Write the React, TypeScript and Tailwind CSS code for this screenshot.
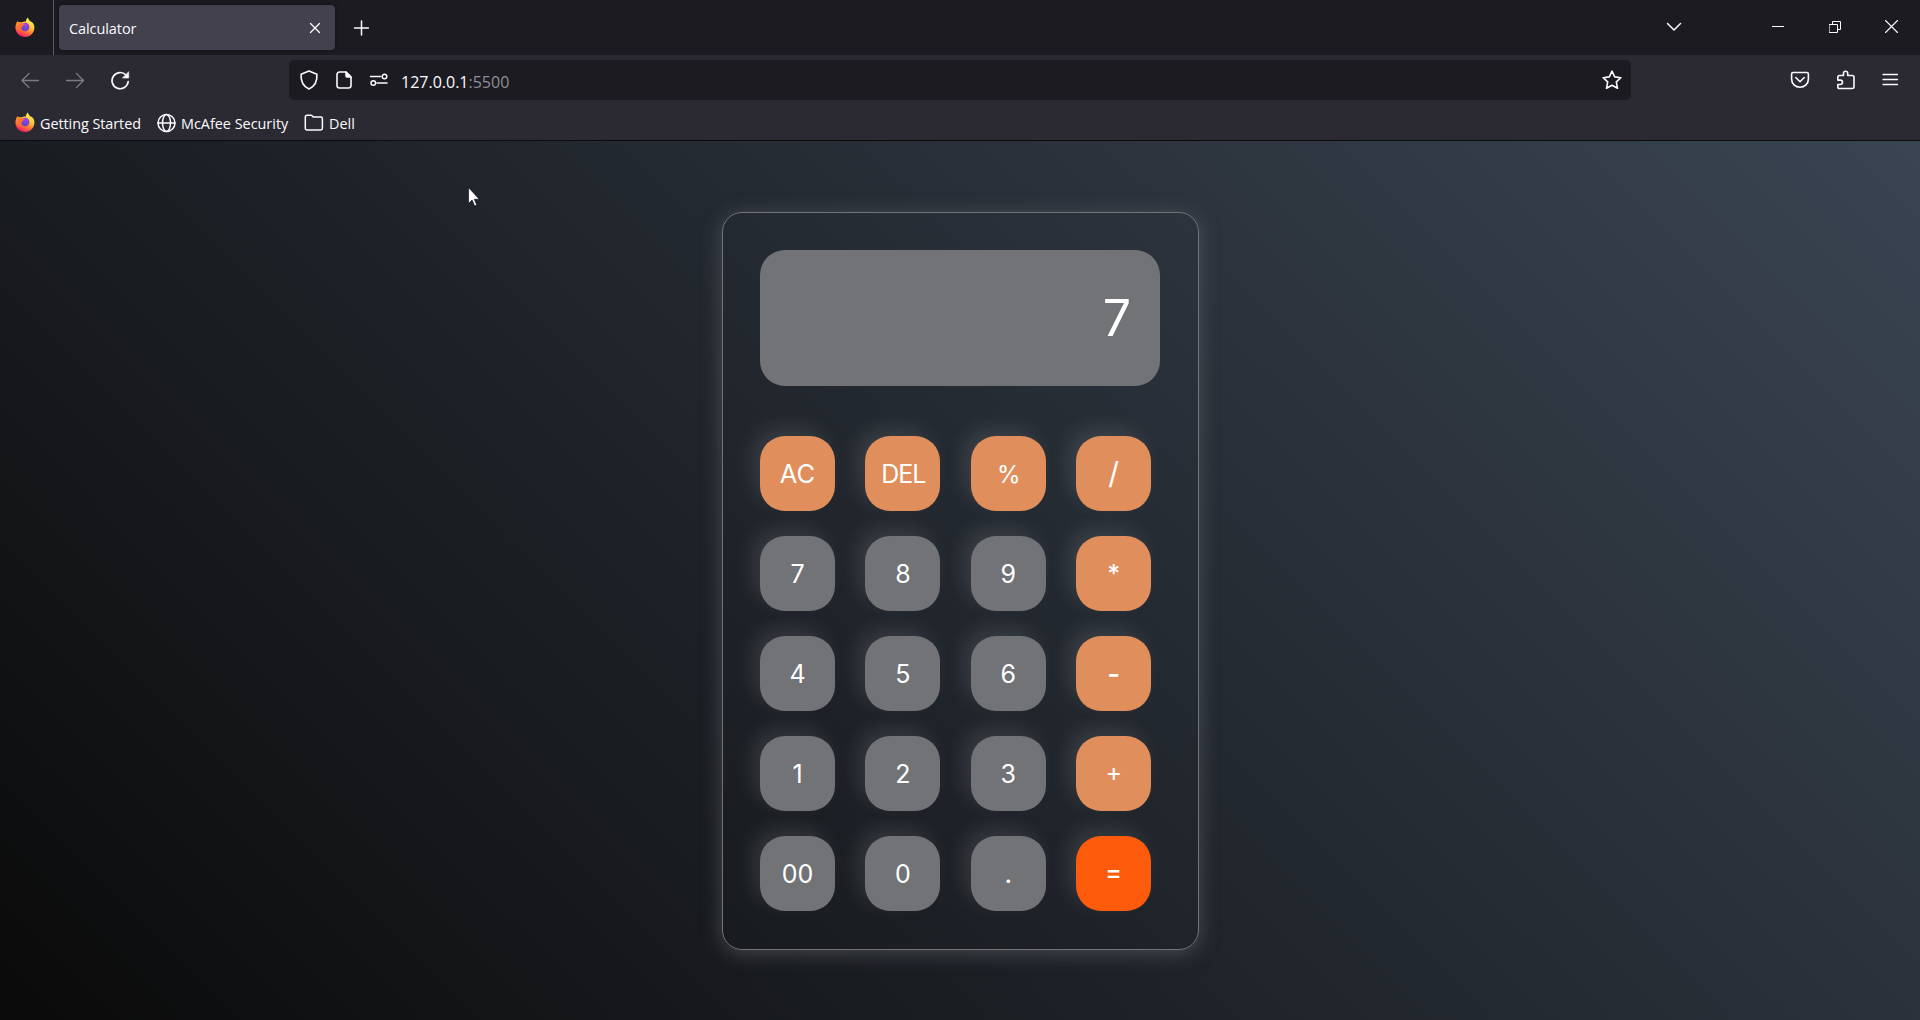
import React from 'react';

type IconProps = { className?: string; children: React.ReactNode; w?: number; h?: number };

function Icon({ className = '', children, w = 20, h = 20 }: IconProps) {
  return (
    <svg
      width={w}
      height={h}
      viewBox={`0 0 ${w} ${h}`}
      fill="none"
      stroke="currentColor"
      strokeWidth="1.5"
      strokeLinecap="round"
      strokeLinejoin="round"
      className={`shrink-0 ${className}`}
    >
      {children}
    </svg>
  );
}

function Firefox({ id }: { id: string }) {
  return (
    <svg width="20" height="20" viewBox="0 0 20 20" className="relative -top-px shrink-0">
      <defs>
        <linearGradient id={`${id}-body`} x1="0.8" y1="0.05" x2="0.35" y2="1">
          <stop offset="0" stopColor="#fff44f" />
          <stop offset="0.4" stopColor="#ffc43a" />
          <stop offset="0.72" stopColor="#ff6a3a" />
          <stop offset="1" stopColor="#f5156c" />
        </linearGradient>
        <radialGradient id={`${id}-globe`} cx="0.6" cy="0.2" r="0.8">
          <stop offset="0" stopColor="#a044ea" />
          <stop offset="1" stopColor="#5b45c9" />
        </radialGradient>
        <linearGradient id={`${id}-fox`} x1="0" y1="0" x2="0.6" y2="1">
          <stop offset="0" stopColor="#ff9a1f" />
          <stop offset="1" stopColor="#ff4f45" />
        </linearGradient>
      </defs>
      <path
        fill={`url(#${id}-body)`}
        d="M2.600 4.200C2.900 5 3.600 5.200 4.500 5c1-.2 1.500 .1 2.200 .6C8.300 4.500 10 4.300 11 4.500 10.900 2.700 11.700 1.100 13 .4c.2 1.700 1.200 2.700 2.300 3.800C18.200 5 19.500 7.500 19.400 11c-.2 5-4.200 8.900-9.300 8.900C4.700 19.900.5 15.800.4 10.700.3 8.300 1.200 6.200 2.600 4.200Z"
      />
      <circle cx="10.200" cy="10" r="4.200" fill={`url(#${id}-globe)`} />
      <path
        fill={`url(#${id}-fox)`}
        d="M2.600 4.200C3.100 5 4.200 5.200 5.200 5.100c.9 0 1.300.7 2 1.100.7.500 2.300.3 2.600.8.200.6-1.500 1.200-1.900 1.500-.2.300 0 1-.4 1.200-.7.400-1.300.9-1.400 1.800-.3 2 .9 3.600 2.700 4.200-4 .5-7.400-2-7.700-5.500-.2-2.400.5-4.300 1.500-6Z"
      />
    </svg>
  );
}

function TabStrip() {
  return (
    <div className="flex h-[55px] items-center bg-[#1c1b22]">
      <div className="flex h-full w-[54px] items-center border-r border-[#5a5961] pl-[15px]">
        <Firefox id="ff-tab" />
      </div>
      <div className="ml-[5px] flex h-[45px] w-[276px] items-center justify-between rounded-[4px] bg-[#42414d] pr-[13px] pl-[10px] shadow-[0_0_4px_rgba(0,0,0,0.5)]">
        <span className="mt-[2px] text-[14.5px] tracking-[-0.08px]">Calculator</span>
        <Icon w={14} h={14}>
          <path d="M2.500 2.500l9 9M11.500 2.500l-9 9" strokeWidth="1.300" />
        </Icon>
      </div>
      <Icon w={16} h={16} className="ml-[18px]">
        <path d="M8.500 1v14M1.500 8h14" />
      </Icon>
      <div className="ml-auto flex items-center">
        <Icon w={16} h={10} className="relative -top-px mr-[90px]">
          <path d="M1.500 1.500L8 8l6.500-6.500" />
        </Icon>
        <Icon w={12} h={12} className="relative -top-px mr-[45px]">
          <path d="M0 5.500h12" strokeWidth="1" strokeLinecap="butt" />
        </Icon>
        <Icon w={12} h={12} className="relative -top-px mr-[44px]">
          <path d="M.5 3.500h8v8h-8zM3.500 3.500v-3h8v8h-3" strokeWidth="1" strokeLinejoin="miter" />
        </Icon>
        <Icon w={13} h={13} className="relative -top-px mr-[22px]">
          <path d="M.5.500l12 12M12.500.500l-12 12" strokeWidth="1.100" />
        </Icon>
      </div>
    </div>
  );
}

function NavBar() {
  return (
    <div className="flex h-[50px] items-center">
      <Icon className="ml-[20px] text-[#7c7b83]">
        <path d="M18.500 10.500H2M9 3.500l-7 7 7 7" strokeWidth="1.300" />
      </Icon>
      <Icon className="ml-[25px] text-[#7c7b83]">
        <path d="M1.500 10.500H18.500M11.500 3.500l7 7-7 7" strokeWidth="1.300" />
      </Icon>
      <Icon className="ml-[25px]">
        <path d="M18.200 11.500A8.100 8.100 0 1 1 16 5" strokeWidth="1.700" />
        <path d="M18.700 2v6h-6z" fill="currentColor" strokeWidth=".6" />
      </Icon>
      <div className="ml-[159px] flex h-[40px] w-[1342px] items-center rounded-[5px] bg-[#1c1b22] pr-[9px] pl-[10px]">
        <Icon>
          <path d="M10 1l7.900 3.300c.4 5.700-1.200 11.700-7.900 14.800C3.300 16 1.700 10 2.100 4.300z" strokeWidth="1.600" />
        </Icon>
        <Icon className="ml-[15px]">
          <path d="M12 2H5.500A2.500 2.500 0 0 0 3 4.500v11A2.500 2.500 0 0 0 5.500 18h9a2.500 2.500 0 0 0 2.500-2.500V7z" strokeWidth="1.600" />
          <path d="M12 2l5 5h-4a1 1 0 0 1-1-1z" fill="currentColor" />
        </Icon>
        <Icon className="ml-[15px]">
          <path d="M1.500 6.500h10M8 13h10" strokeWidth="1.500" />
          <circle cx="15.500" cy="6.500" r="2.300" />
          <circle cx="4.300" cy="13" r="2.300" />
        </Icon>
        <span className="mt-[3px] ml-[12px] text-[16px]">
          127.0.0.1<span className="text-[#8f8e96]">:5500</span>
        </span>
        <Icon w={20} h={20} className="ml-auto">
          <path
            d="M10 1.200l2.700 5.700 6.200.8-4.600 4.200 1.200 6.400L10 15.200l-5.500 3.100 1.200-6.400L1.100 7.700l6.200-.8z"
            strokeWidth="1.600"
          />
        </Icon>
      </div>
      <div className="mr-[20px] ml-auto flex items-center">
        <Icon>
          <path d="M3.200 2.500h13.600c1 0 1.600.7 1.600 1.600V9c0 4.700-3.700 8.200-8.400 8.200S1.600 13.700 1.600 9V4.100c0-.9.6-1.600 1.600-1.600z" strokeWidth="1.600" />
          <path d="M5.800 7.500L10 11.700l4.200-4.200" strokeWidth="1.600" />
        </Icon>
        <Icon className="ml-[26px]">
          <path
            d="M3.500 5.500h4V3.300a2.100 2.100 0 0 1 4.200 0v2.200h4.600c1.100 0 1.700.7 1.700 1.700v9.600c0 1-.7 1.700-1.700 1.700H3.200c-.9 0-1.400-.6-1.400-1.400v-2.600h2.500a2.100 2.100 0 0 0 0-4.400H1.800V7.200c0-1 .7-1.700 1.700-1.700z"
            strokeWidth="1.600"
          />
        </Icon>
        <Icon className="ml-[24px]">
          <path d="M3 4.500h14.500M3 9.500h14.500M3 14.500h14.500" strokeWidth="1.300" />
        </Icon>
      </div>
    </div>
  );
}

function Bookmarks() {
  return (
    <div className="flex h-[35px] items-center pt-px pl-[15px] text-[14.400px]">
      <Firefox id="ff-mark" />
      <span className="mt-px ml-[5px] w-[117px] tracking-[-0.050px] whitespace-nowrap">Getting Started</span>
      <Icon>
        <circle cx="9.500" cy="10" r="8.500" />
        <ellipse cx="9.500" cy="10" rx="4" ry="8.500" />
        <path d="M1 10h17" />
      </Icon>
      <span className="mt-px ml-[4px] w-[123px] whitespace-nowrap">McAfee Security</span>
      <Icon>
        <path d="M3.200 2.200h3.600c.6 0 1 .2 1.400.6l1 1.200h7.500c1 0 1.700.7 1.700 1.700v9.600c0 1-.7 1.700-1.700 1.700H3c-1 0-1.700-.7-1.700-1.700V4c0-1.100.8-1.800 1.900-1.800z" />
      </Icon>
      <span className="mt-px ml-[5px]">Dell</span>
    </div>
  );
}

const ROWS: string[][] = [
  ['AC', 'DEL', '%', '/'],
  ['7', '8', '9', '*'],
  ['4', '5', '6', '-'],
  ['1', '2', '3', '+'],
  ['00', '0', '.', '='],
];

const OPERATORS = ['AC', 'DEL', '%', '/', '*', '-', '+'];

const LABEL_STYLE: Record<string, string> = {
  AC: 'text-[25.5px]',
  DEL: 'tracking-[-1px] -mr-px',
  '%': 'text-[24px] tracking-[-1px]',
  '/': 'text-[30px] -mt-[3px]',
  '-': 'font-medium text-[28px] -mt-[2px]',
  '+': 'text-[25px] -mt-[3px]',
  '*': 'font-medium',
  '=': 'font-medium text-[25px] -mt-[3px]',
  '.': 'font-medium',
};

function keyColor(label: string) {
  if (label === '=') return 'bg-[#fb5b0a]';
  return OPERATORS.includes(label) ? 'bg-[#e08e5b]' : 'bg-[#717377]';
}

function Calculator() {
  return (
    <div className="h-[738px] w-[477px] rounded-[20px] border border-[#717377] px-[37px] pt-[37px] shadow-[0_3px_20px_rgba(113,115,119,0.5)]">
      <div className="flex h-[136px] w-[400px] items-center justify-end rounded-[25px] bg-[#717377] pr-[29px] text-[50px]">
        <span>7</span>
      </div>
      <div className="mt-[50px] flex flex-col gap-[25px]">
        {ROWS.map((row) => (
          <div key={row[0]} className="flex gap-[30.4px]">
            {row.map((label) => (
              <button
                key={label}
                className={`flex size-[75px] shrink-0 items-center justify-center rounded-[25px] pt-[2px] text-[25px] shadow-[-8px_-8px_20px_rgba(255,255,255,0.1)] ${keyColor(label)}`}
              >
                <span className={LABEL_STYLE[label] ?? ''}>{label}</span>
              </button>
            ))}
          </div>
        ))}
      </div>
    </div>
  );
}

export default function App() {
  return (
    <div className="flex h-[1020px] w-[1920px] flex-col overflow-hidden text-[#fbfbfe]">
      <header className="h-[141px] shrink-0 border-b border-[#0c0c0d] bg-[#2b2a33] font-['Open_Sans',sans-serif]">
        <TabStrip />
        <NavBar />
        <Bookmarks />
      </header>
      <main className="relative flex flex-1 justify-center bg-[linear-gradient(45deg,#0a0a0a,#3a4452)] pt-[71px] pl-px font-['Inter',sans-serif] text-white">
        <Calculator />
        <svg className="absolute top-[46px] left-[468px]" width="12" height="20" viewBox="0 0 12 20">
          <path d="M.5.500v16l3.600-3.400 2.500 6 2.200-1-2.500-5.800h5z" fill="#fff" stroke="#111" strokeWidth=".7" />
        </svg>
      </main>
    </div>
  );
}
